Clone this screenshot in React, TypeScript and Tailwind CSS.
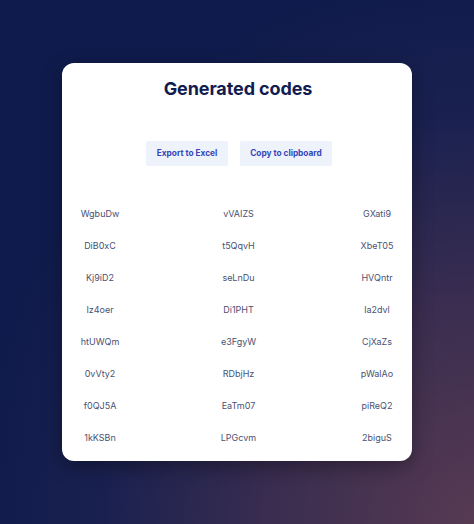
import React from "react";

const codes = [
  ["WgbuDw", "vVAIZS", "GXati9"],
  ["DiB0xC", "t5QqvH", "XbeT05"],
  ["Kj9iD2", "seLnDu", "HVQntr"],
  ["Iz4oer", "Di1PHT", "la2dvl"],
  ["htUWQm", "e3FgyW", "CjXaZs"],
  ["0vVty2", "RDbjHz", "pWalAo"],
  ["f0QJ5A", "EaTm07", "piReQ2"],
  ["1kKSBn", "LPGcvm", "2biguS"],
];

export default function App() {
  return (
    <div
      className="w-[474px] h-[524px] flex items-center justify-center bg-[#0f1b4c] bg-[radial-gradient(ellipse_at_100%_100%,#573a52_0%,#3a2d50_30%,#1a2150_55%,transparent_75%)]"
      style={{ fontFamily: "Inter, 'Noto Sans', sans-serif" }}
    >
      <div className="w-[350px] h-[398px] bg-white rounded-[12px] shadow-[0_6px_20px_rgba(0,0,0,0.35)] flex flex-col items-center pt-[14px]">
        <h1 className="text-[18px] leading-[24px] font-bold text-[#121c4f] tracking-[-0.1px] ml-[2px]">
          Generated codes
        </h1>
        <div className="flex gap-[12px] mt-[40px] ml-[4px]">
          <button className="h-[25px] w-[82px] bg-[#eef2fb] rounded-[2px] text-[8.3px] font-bold text-[#3447b8]">
            Export to Excel
          </button>
          <button className="h-[25px] w-[92px] bg-[#eef2fb] rounded-[2px] text-[8.3px] font-bold text-[#3447b8]">
            Copy to clipboard
          </button>
        </div>
        <div className="w-full mt-[32px] pl-[18px] pr-[15px] flex flex-col">
          {codes.map((row, i) => (
            <div key={i} className="h-[32px] flex items-center justify-between">
              {row.map((c) => (
                <div key={c} className="w-[40px] flex justify-center">
                  <span className="whitespace-nowrap text-[9px] text-[#4a5172]">{c}</span>
                </div>
              ))}
            </div>
          ))}
        </div>
      </div>
    </div>
  );
}
